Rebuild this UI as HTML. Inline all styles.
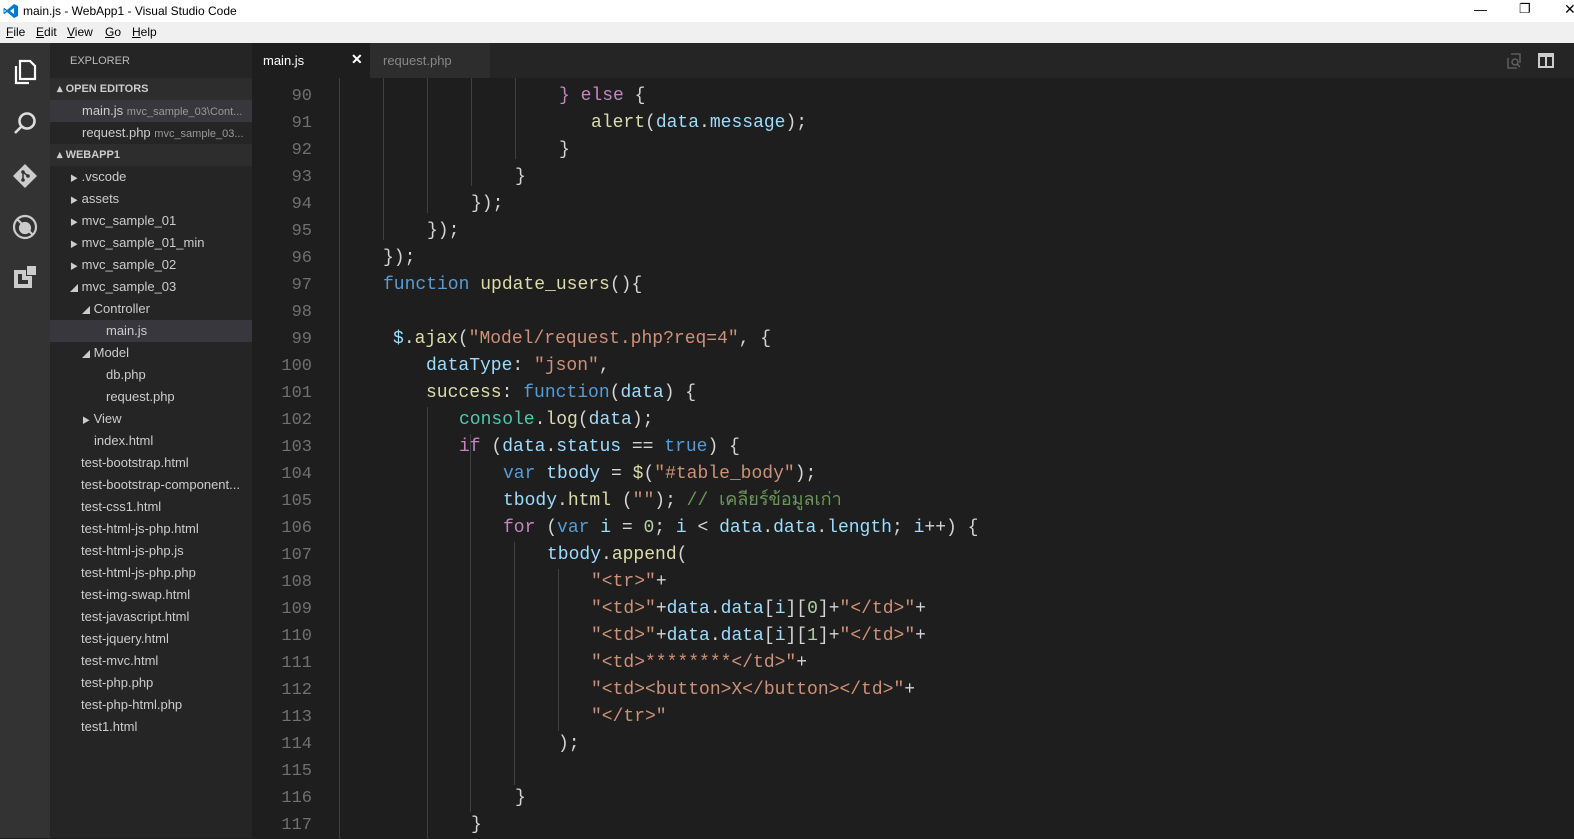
<!DOCTYPE html><html><head><meta charset="utf-8"><style>
*{margin:0;padding:0;box-sizing:border-box}
body{width:1574px;height:838px;overflow:hidden;background:#1e1e1e;font-family:"Liberation Sans","Noto Sans CJK SC",sans-serif;position:relative}
#title{position:absolute;left:0;top:0;width:1574px;height:22px;background:#fff;font-size:12px;color:#000}
#menu{position:absolute;left:0;top:22px;width:1574px;height:21px;background:#f0f0f0;font-size:12px;color:#000}
#act{position:absolute;left:0;top:43px;width:50px;height:795px;background:#333}
#side{position:absolute;left:50px;top:43px;width:202px;height:795px;background:#252526;color:#ccc;font-size:13px}
.r{position:absolute;left:0;width:202px;height:22px;line-height:22px;white-space:nowrap;overflow:hidden}
.h{font-weight:bold;font-size:11px;color:#ccc;background:#2d2d2e}
.sel{background:#37373d}
.d{color:#999;font-size:11px}
#tabs{position:absolute;left:252px;top:43px;width:1322px;height:35px;background:#252526;font-size:13px}
.c{position:absolute;white-space:pre;font-family:"Liberation Mono","DejaVu Sans Mono","Noto Sans CJK SC",monospace;font-size:18px;line-height:27px;height:27px;color:#d4d4d4}
.n{position:absolute;left:252px;width:60px;text-align:right;color:#707070;font-size:17px}
.k{color:#569cd6}.p{color:#c586c0}.s{color:#ce9178}.v{color:#9cdcfe}.f{color:#dcdcaa}.g{color:#4ec9b0}.m{color:#6a9955}.o{color:#b5cea8}
.gd{position:absolute;width:1px;background:#404040}
#code{position:absolute;left:0;top:3px;width:1574px;height:835px}
</style></head><body>
<div id="title"><svg style="position:absolute;left:3px;top:3px" width="16" height="16" viewBox="0 0 16 16"><path d="M11 1 L15 3 V13 L11 15 L4 9 L1.5 11 L0.5 10.5 V5.5 L1.5 5 L4 7 Z M11 5 L7 8 L11 11 Z M1.5 6.5 V9.5 L3 8 Z" fill="#0078d4"/></svg><span style="position:absolute;left:23px;top:4px">main.js - WebApp1 - Visual Studio Code</span>
<span style="position:absolute;left:1474px;top:2px;font-size:13px">—</span><span style="position:absolute;left:1519px;top:1px;font-size:13px">❐</span><span style="position:absolute;left:1564px;top:1px;font-size:14px">✕</span></div>
<div id="menu"><span style="position:absolute;left:6px;top:3px"><u>F</u>ile</span><span style="position:absolute;left:36px;top:3px"><u>E</u>dit</span><span style="position:absolute;left:67px;top:3px"><u>V</u>iew</span><span style="position:absolute;left:105px;top:3px"><u>G</u>o</span><span style="position:absolute;left:132px;top:3px"><u>H</u>elp</span></div>
<div id="act">
<svg style="position:absolute;left:13px;top:16px" width="24" height="26" viewBox="0 0 24 26" fill="none" stroke="#fff" stroke-width="2.2"><path d="M7 2 H17 L22 7 V20 H7 Z"/><path d="M3 7 V24 H16"/></svg>
<svg style="position:absolute;left:12px;top:68px" width="26" height="26" viewBox="0 0 26 26" fill="none" stroke="#ddd" stroke-width="2.6"><circle cx="15" cy="10" r="7.5"/><path d="M9.5 15.5 L3 22"/></svg>
<svg style="position:absolute;left:12px;top:120px" width="26" height="26" viewBox="0 0 26 26"><path d="M13 1 L25 13 L13 25 L1 13 Z" fill="#ccc"/><circle cx="11" cy="9" r="1.8" fill="#333"/><circle cx="11" cy="17" r="1.8" fill="#333"/><circle cx="16" cy="13" r="1.8" fill="#333"/><path d="M11 9 V17 M11 9 L16 13" stroke="#333" stroke-width="1.5"/></svg>
<svg style="position:absolute;left:12px;top:171px" width="26" height="26" viewBox="0 0 26 26" fill="none" stroke="#ccc" stroke-width="2.2"><circle cx="13" cy="13" r="11"/><circle cx="13" cy="14" r="5" fill="#ccc"/><path d="M5 5 L21 21"/></svg>
<svg style="position:absolute;left:13px;top:222px" width="24" height="24" viewBox="0 0 24 24" fill="#ccc"><path d="M1 5 H13 V11 H19 V23 H1 Z M5 9 V19 H15 V15 H9 V9 Z"/><rect x="14" y="1" width="9" height="9"/></svg>
</div>
<div id="side">
<div class="r" style="top:7px;left:20px;font-size:11px;color:#bbb">EXPLORER</div>
<div class="r h" style="top:35px;padding-left:7px">▴ OPEN EDITORS</div>
<div class="r sel" style="top:57px;padding-left:32px">main.js <span class="d">mvc_sample_03\Cont...</span></div>
<div class="r" style="top:79px;padding-left:32px">request.php <span class="d">mvc_sample_03...</span></div>
<div class="r h" style="top:101px;padding-left:7px">▴ WEBAPP1</div>
<div class="r" style="top:123px;padding-left:20px"><span style="font-size:8px">▶</span> .vscode</div>
<div class="r" style="top:145px;padding-left:20px"><span style="font-size:8px">▶</span> assets</div>
<div class="r" style="top:167px;padding-left:20px"><span style="font-size:8px">▶</span> mvc_sample_01</div>
<div class="r" style="top:189px;padding-left:20px"><span style="font-size:8px">▶</span> mvc_sample_01_min</div>
<div class="r" style="top:211px;padding-left:20px"><span style="font-size:8px">▶</span> mvc_sample_02</div>
<div class="r" style="top:233px;padding-left:20px"><span style="font-size:8px">◢</span> mvc_sample_03</div>
<div class="r" style="top:255px;padding-left:32px"><span style="font-size:8px">◢</span> Controller</div>
<div class="r sel" style="top:277px;padding-left:56px">main.js</div>
<div class="r" style="top:299px;padding-left:32px"><span style="font-size:8px">◢</span> Model</div>
<div class="r" style="top:321px;padding-left:56px">db.php</div>
<div class="r" style="top:343px;padding-left:56px">request.php</div>
<div class="r" style="top:365px;padding-left:32px"><span style="font-size:8px">▶</span> View</div>
<div class="r" style="top:387px;padding-left:44px">index.html</div>
<div class="r" style="top:409px;padding-left:31px">test-bootstrap.html</div>
<div class="r" style="top:431px;padding-left:31px">test-bootstrap-component...</div>
<div class="r" style="top:453px;padding-left:31px">test-css1.html</div>
<div class="r" style="top:475px;padding-left:31px">test-html-js-php.html</div>
<div class="r" style="top:497px;padding-left:31px">test-html-js-php.js</div>
<div class="r" style="top:519px;padding-left:31px">test-html-js-php.php</div>
<div class="r" style="top:541px;padding-left:31px">test-img-swap.html</div>
<div class="r" style="top:563px;padding-left:31px">test-javascript.html</div>
<div class="r" style="top:585px;padding-left:31px">test-jquery.html</div>
<div class="r" style="top:607px;padding-left:31px">test-mvc.html</div>
<div class="r" style="top:629px;padding-left:31px">test-php.php</div>
<div class="r" style="top:651px;padding-left:31px">test-php-html.php</div>
<div class="r" style="top:673px;padding-left:31px">test1.html</div>
</div>
<div id="tabs">
<div style="position:absolute;left:0;top:0;width:118px;height:35px;background:#1e1e1e;color:#fff"><span style="position:absolute;left:11px;top:10px">main.js</span><span style="position:absolute;left:99px;top:8px;font-size:14px;font-weight:bold">✕</span></div>
<div style="position:absolute;left:118px;top:0;width:120px;height:35px;background:#2d2d2d;color:#888"><span style="position:absolute;left:13px;top:10px">request.php</span></div>
<svg style="position:absolute;left:1254px;top:10px" width="16" height="16" viewBox="0 0 16 16" fill="none" stroke="#666" stroke-width="1.3"><path d="M5 1 H14 V10 M2 5 V15 H11"/><circle cx="9" cy="9" r="3"/><path d="M11 11 L14 14"/></svg>
<svg style="position:absolute;left:1286px;top:10px" width="16" height="15" viewBox="0 0 16 15"><rect x="1" y="1" width="14" height="13" fill="none" stroke="#ccc" stroke-width="2"/><rect x="1" y="1" width="14" height="3" fill="#ccc"/><path d="M8 1 V14" stroke="#ccc" stroke-width="2"/></svg>
</div>
<div class="gd" style="left:339px;top:78px;height:760px"></div>
<div class="gd" style="left:383px;top:78px;height:162px"></div>
<div class="gd" style="left:427px;top:78px;height:135px"></div>
<div class="gd" style="left:471px;top:78px;height:108px"></div>
<div class="gd" style="left:515px;top:78px;height:81px"></div>
<div class="gd" style="left:427px;top:407px;height:431px"></div>
<div class="gd" style="left:470px;top:434px;height:378px"></div>
<div class="gd" style="left:514px;top:542px;height:243px"></div>
<div class="gd" style="left:558px;top:569px;height:162px"></div>
<div id="code">
<div class="c n" style="top:80px">90</div><div class="c" style="left:559px;top:80px"><span class="p">}</span> <span class="p">else</span> {</div>
<div class="c n" style="top:107px">91</div><div class="c" style="left:591px;top:107px"><span class="f">alert</span>(<span class="v">data</span>.<span class="v">message</span>);</div>
<div class="c n" style="top:134px">92</div><div class="c" style="left:559px;top:134px">}</div>
<div class="c n" style="top:161px">93</div><div class="c" style="left:515px;top:161px">}</div>
<div class="c n" style="top:188px">94</div><div class="c" style="left:471px;top:188px">});</div>
<div class="c n" style="top:215px">95</div><div class="c" style="left:427px;top:215px">});</div>
<div class="c n" style="top:242px">96</div><div class="c" style="left:383px;top:242px">});</div>
<div class="c n" style="top:269px">97</div><div class="c" style="left:383px;top:269px"><span class="k">function</span> <span class="f">update_users</span>(){</div>
<div class="c n" style="top:296px">98</div>
<div class="c n" style="top:323px">99</div><div class="c" style="left:393px;top:323px"><span class="v">$</span>.<span class="f">ajax</span>(<span class="s">"Model/request.php?req=4"</span>, {</div>
<div class="c n" style="top:350px">100</div><div class="c" style="left:426px;top:350px"><span class="v">dataType</span>: <span class="s">"json"</span>,</div>
<div class="c n" style="top:377px">101</div><div class="c" style="left:426px;top:377px"><span class="f">success</span>: <span class="k">function</span>(<span class="v">data</span>) {</div>
<div class="c n" style="top:404px">102</div><div class="c" style="left:459px;top:404px"><span class="g">console</span>.<span class="f">log</span>(<span class="v">data</span>);</div>
<div class="c n" style="top:431px">103</div><div class="c" style="left:459px;top:431px"><span class="p">if</span> (<span class="v">data</span>.<span class="v">status</span> == <span class="k">true</span>) {</div>
<div class="c n" style="top:458px">104</div><div class="c" style="left:503px;top:458px"><span class="k">var</span> <span class="v">tbody</span> = <span class="f">$</span>(<span class="s">"#table_body"</span>);</div>
<div class="c n" style="top:485px">105</div><div class="c" style="left:503px;top:485px"><span class="v">tbody</span>.<span class="f">html</span> (<span class="s">""</span>); <span class="m">// เคลียร์ข้อมูลเก่า</span></div>
<div class="c n" style="top:512px">106</div><div class="c" style="left:503px;top:512px"><span class="p">for</span> (<span class="k">var</span> <span class="v">i</span> = <span class="o">0</span>; <span class="v">i</span> &lt; <span class="v">data</span>.<span class="v">data</span>.<span class="v">length</span>; <span class="v">i</span>++) {</div>
<div class="c n" style="top:539px">107</div><div class="c" style="left:547px;top:539px"><span class="v">tbody</span>.<span class="f">append</span>(</div>
<div class="c n" style="top:566px">108</div><div class="c" style="left:591px;top:566px"><span class="s">"&lt;tr&gt;"</span>+</div>
<div class="c n" style="top:593px">109</div><div class="c" style="left:591px;top:593px"><span class="s">"&lt;td&gt;"</span>+<span class="v">data</span>.<span class="v">data</span>[<span class="v">i</span>][<span class="o">0</span>]+<span class="s">"&lt;/td&gt;"</span>+</div>
<div class="c n" style="top:620px">110</div><div class="c" style="left:591px;top:620px"><span class="s">"&lt;td&gt;"</span>+<span class="v">data</span>.<span class="v">data</span>[<span class="v">i</span>][<span class="o">1</span>]+<span class="s">"&lt;/td&gt;"</span>+</div>
<div class="c n" style="top:647px">111</div><div class="c" style="left:591px;top:647px"><span class="s">"&lt;td&gt;********&lt;/td&gt;"</span>+</div>
<div class="c n" style="top:674px">112</div><div class="c" style="left:591px;top:674px"><span class="s">"&lt;td&gt;&lt;button&gt;X&lt;/button&gt;&lt;/td&gt;"</span>+</div>
<div class="c n" style="top:701px">113</div><div class="c" style="left:591px;top:701px"><span class="s">"&lt;/tr&gt;"</span></div>
<div class="c n" style="top:728px">114</div><div class="c" style="left:558px;top:728px">);</div>
<div class="c n" style="top:755px">115</div>
<div class="c n" style="top:782px">116</div><div class="c" style="left:515px;top:782px">}</div>
<div class="c n" style="top:809px">117</div><div class="c" style="left:471px;top:809px">}</div>
</div>
</body></html>
